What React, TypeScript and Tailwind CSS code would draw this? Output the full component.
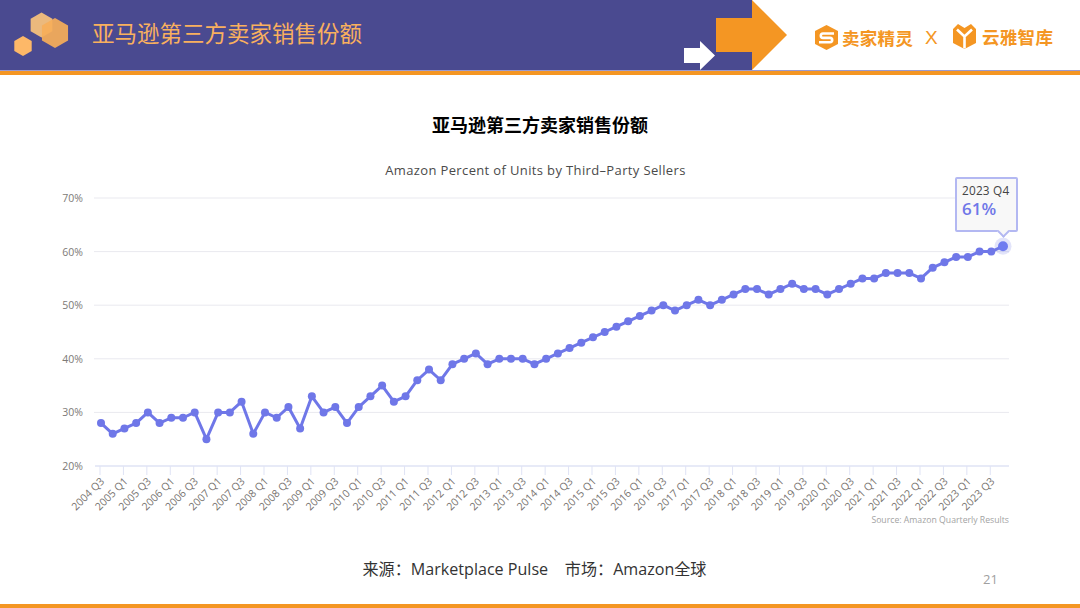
const cjk = "'Open Sans', 'Noto Sans CJK SC', sans-serif";
const vals = [28,26,27,28,30,28,29,29,30,25,30,30,32,26,30,29,31,27,33,30,31,28,31,33,35,32,33,36,38,36,39,40,41,39,40,40,40,39,40,41,42,43,44,45,46,47,48,49,50,49,50,51,50,51,52,53,53,52,53,54,53,53,52,53,54,55,55,56,56,56,55,57,58,59,59,60,60,61];
const X0 = 101, DX = (1003 - 101) / 77;
const xOf = (i: number) => X0 + i * DX;
const yOf = (v: number) => 466 - (v - 20) * 5.36;
const labels: { i: number; t: string }[] = [];
for (let i = 0; i < 78; i += 2) {
  const q = i + 2;
  const year = 2004 + Math.floor(q / 4);
  labels.push({ i, t: `${year} Q${q % 4 === 0 ? 1 : 3}` });
}
function hexPts(cx: number, cy: number, r: number) {
  return [[0, -r], [r * 0.87, -r / 2], [r * 0.87, r / 2], [0, r], [-r * 0.87, r / 2], [-r * 0.87, -r / 2]].map((p) => `${cx + p[0]},${cy + p[1]}`).join(" ");
}
function Chart() {
  const pts = vals.map((v, i) => `${xOf(i)},${yOf(v)}`).join(" ");
  return (
    <svg width="1080" height="400" viewBox="0 140 1080 400" className="block">
      <g fontFamily="'Open Sans', sans-serif">
        <text x="535.5" y="174.5" textAnchor="middle" fontSize="13" letterSpacing="0.36" fill="#4a4a4a">Amazon Percent of Units by Third–Party Sellers</text>
        {[30, 40, 50, 60, 70].map((v) => (
          <line key={v} x1="94" x2="1009" y1={yOf(v)} y2={yOf(v)} stroke="#e9e9ef" strokeWidth="1" />
        ))}
        {[20, 30, 40, 50, 60, 70].map((v) => (
          <text key={v} x="83" y={yOf(v) + 4} textAnchor="end" fontSize="10.5" fill="#7d7a76">{v}%</text>
        ))}
        <line x1="95" x2="1009" y1="466" y2="466" stroke="#dfe3f5" strokeWidth="1.5" />
        {labels.map((l) => (
          <g key={l.i}>
            <line x1={xOf(l.i) - 1} x2={xOf(l.i) - 1} y1="466" y2="475" stroke="#dfe3f5" strokeWidth="1" />
            <text x={xOf(l.i) + 4} y="482" textAnchor="end" fontSize="10.5" fill="#77736f" transform={`rotate(-45 ${xOf(l.i) + 4} 482)`}>{l.t}</text>
          </g>
        ))}
        <text x="1009" y="523" textAnchor="end" fontSize="8.7" fill="#a3a3a3">Source: Amazon Quarterly Results</text>
        <polyline points={pts} fill="none" stroke="#6f77e8" strokeWidth="3" strokeLinejoin="round" />
        {vals.map((v, i) => (
          <circle key={i} cx={xOf(i)} cy={yOf(v)} r="4" fill="#6f77e8" />
        ))}
        <circle cx="1003" cy={yOf(61)} r="8.5" fill="#6f77e8" fillOpacity="0.2" />
        <circle cx="1003" cy={yOf(61)} r="5" fill="#6f7cf0" />
      </g>
    </svg>
  );
}
function Tooltip() {
  return (
    <div className="absolute left-[955px] top-[37px] w-[63px] h-[55px] border-2 border-[#b3b8f2] rounded-[2px] bg-[#f8f8f8] pl-[5px] pt-[4px] font-['Open_Sans',sans-serif]">
      <div className="text-[11.8px] leading-[15px] text-[#444] font-medium tracking-[0.2px] whitespace-nowrap">2023 Q4</div>
      <div className="text-[17px] leading-[22px] font-semibold text-[#6f77e8]">61%</div>
      <div className="absolute left-[42px] top-[48px] w-[9px] h-[9px] rotate-45 bg-[#f8f8f8] border-r-2 border-b-2 border-[#b3b8f2]" />
    </div>
  );
}
export default function App() {
  return (
    <div className="w-[1080px] h-[608px] bg-white flex flex-col overflow-hidden" style={{ fontFamily: cjk }}>
      <div className="h-[70px] flex">
        <div className="w-[752px] h-[70px] bg-[#4a4a90] flex items-center relative">
          <svg width="92" height="70" viewBox="0 0 92 70" className="shrink-0">
            <polygon points={hexPts(41.5, 25, 12.5)} fill="#f8c27c" fillOpacity="0.92" />
            <polygon points={hexPts(55, 33, 15)} fill="#f6ae59" fillOpacity="0.92" />
            <polygon points={hexPts(23, 46, 10)} fill="#fdb868" />
          </svg>
          <div className="text-[22.5px] leading-[28px] text-[#f9b05e] mb-[3px] whitespace-nowrap">亚马逊第三方卖家销售份额</div>
          <svg className="absolute left-[684px] top-[41px]" width="32" height="29" viewBox="0 0 32 29">
            <polygon points="0,7 16,7 16,0 31,14.5 16,29 16,22 0,22" fill="#ffffff" />
          </svg>
        </div>
        <div className="relative w-[328px] h-[70px]">
          <svg className="absolute left-[-36px] top-0" width="72" height="70" viewBox="0 0 72 70">
            <polygon points="0,18 36,18 36,0 71,35 36,70 36,52 0,52" fill="#f49623" />
          </svg>
          <div className="absolute left-[63px] top-[25px] flex items-center text-[#f49623]">
            <svg width="23" height="25" viewBox="0 0 23 25">
              <polygon points="11.5,0 23,6 23,19 11.5,25 0,19 0,6" fill="#f49623" />
              <path d="M19 8.5H8a2.2 2.2 0 0 0 0 4.4H15a2.2 2.2 0 0 1 0 4.4H4" fill="none" stroke="#fff" strokeWidth="2.6" />
            </svg>
            <div className="ml-[4px] w-[73px] text-[17.5px] leading-[24px] font-bold whitespace-nowrap tracking-[0.3px]">卖家精灵</div>
            <div className="ml-[10px] font-['Liberation_Sans',sans-serif] text-[19px] leading-[24px] font-normal">X</div>
          </div>
          <div className="absolute left-[201px] top-[24px] flex items-center text-[#f49623]">
            <svg width="23" height="25" viewBox="0 0 23 25">
              <polygon points="5,0 11.5,4 18,0 23,5 23,19 11.5,25 0,19 0,5" fill="#f49623" />
              <path d="M4 5.5l7.5 7 7.5-7M11.5 12.5v12" fill="none" stroke="#fff" strokeWidth="2.6" />
            </svg>
            <div className="ml-[6px] text-[17.5px] leading-[24px] font-bold whitespace-nowrap tracking-[0.3px]">云雅智库</div>
          </div>
        </div>
      </div>
      <div className="h-[1px] bg-[#9a9ad0]" />
      <div className="h-[4px] bg-[#f49623]" />
      <div className="h-[38px]" />
      <div className="h-[25px] flex items-center justify-center text-[18px] font-bold text-black">亚马逊第三方卖家销售份额</div>
      <div className="h-[2px]" />
      <div className="relative h-[400px] overflow-hidden">
        <Chart />
        <Tooltip />
      </div>
      <div className="h-[16px]" />
      <div className="relative h-[26px] flex items-center justify-center pr-[11px] text-[16.1px] text-[#333]">
        <span className="whitespace-pre">来源：Marketplace Pulse    市场：Amazon全球</span>
        <span className="absolute left-[983px] top-[13px] text-[13px] leading-[20px] text-[#a0a0a0]">21</span>
      </div>
      <div className="flex-1" />
      <div className="h-[4px] bg-[#f49623]" />
    </div>
  );
}
